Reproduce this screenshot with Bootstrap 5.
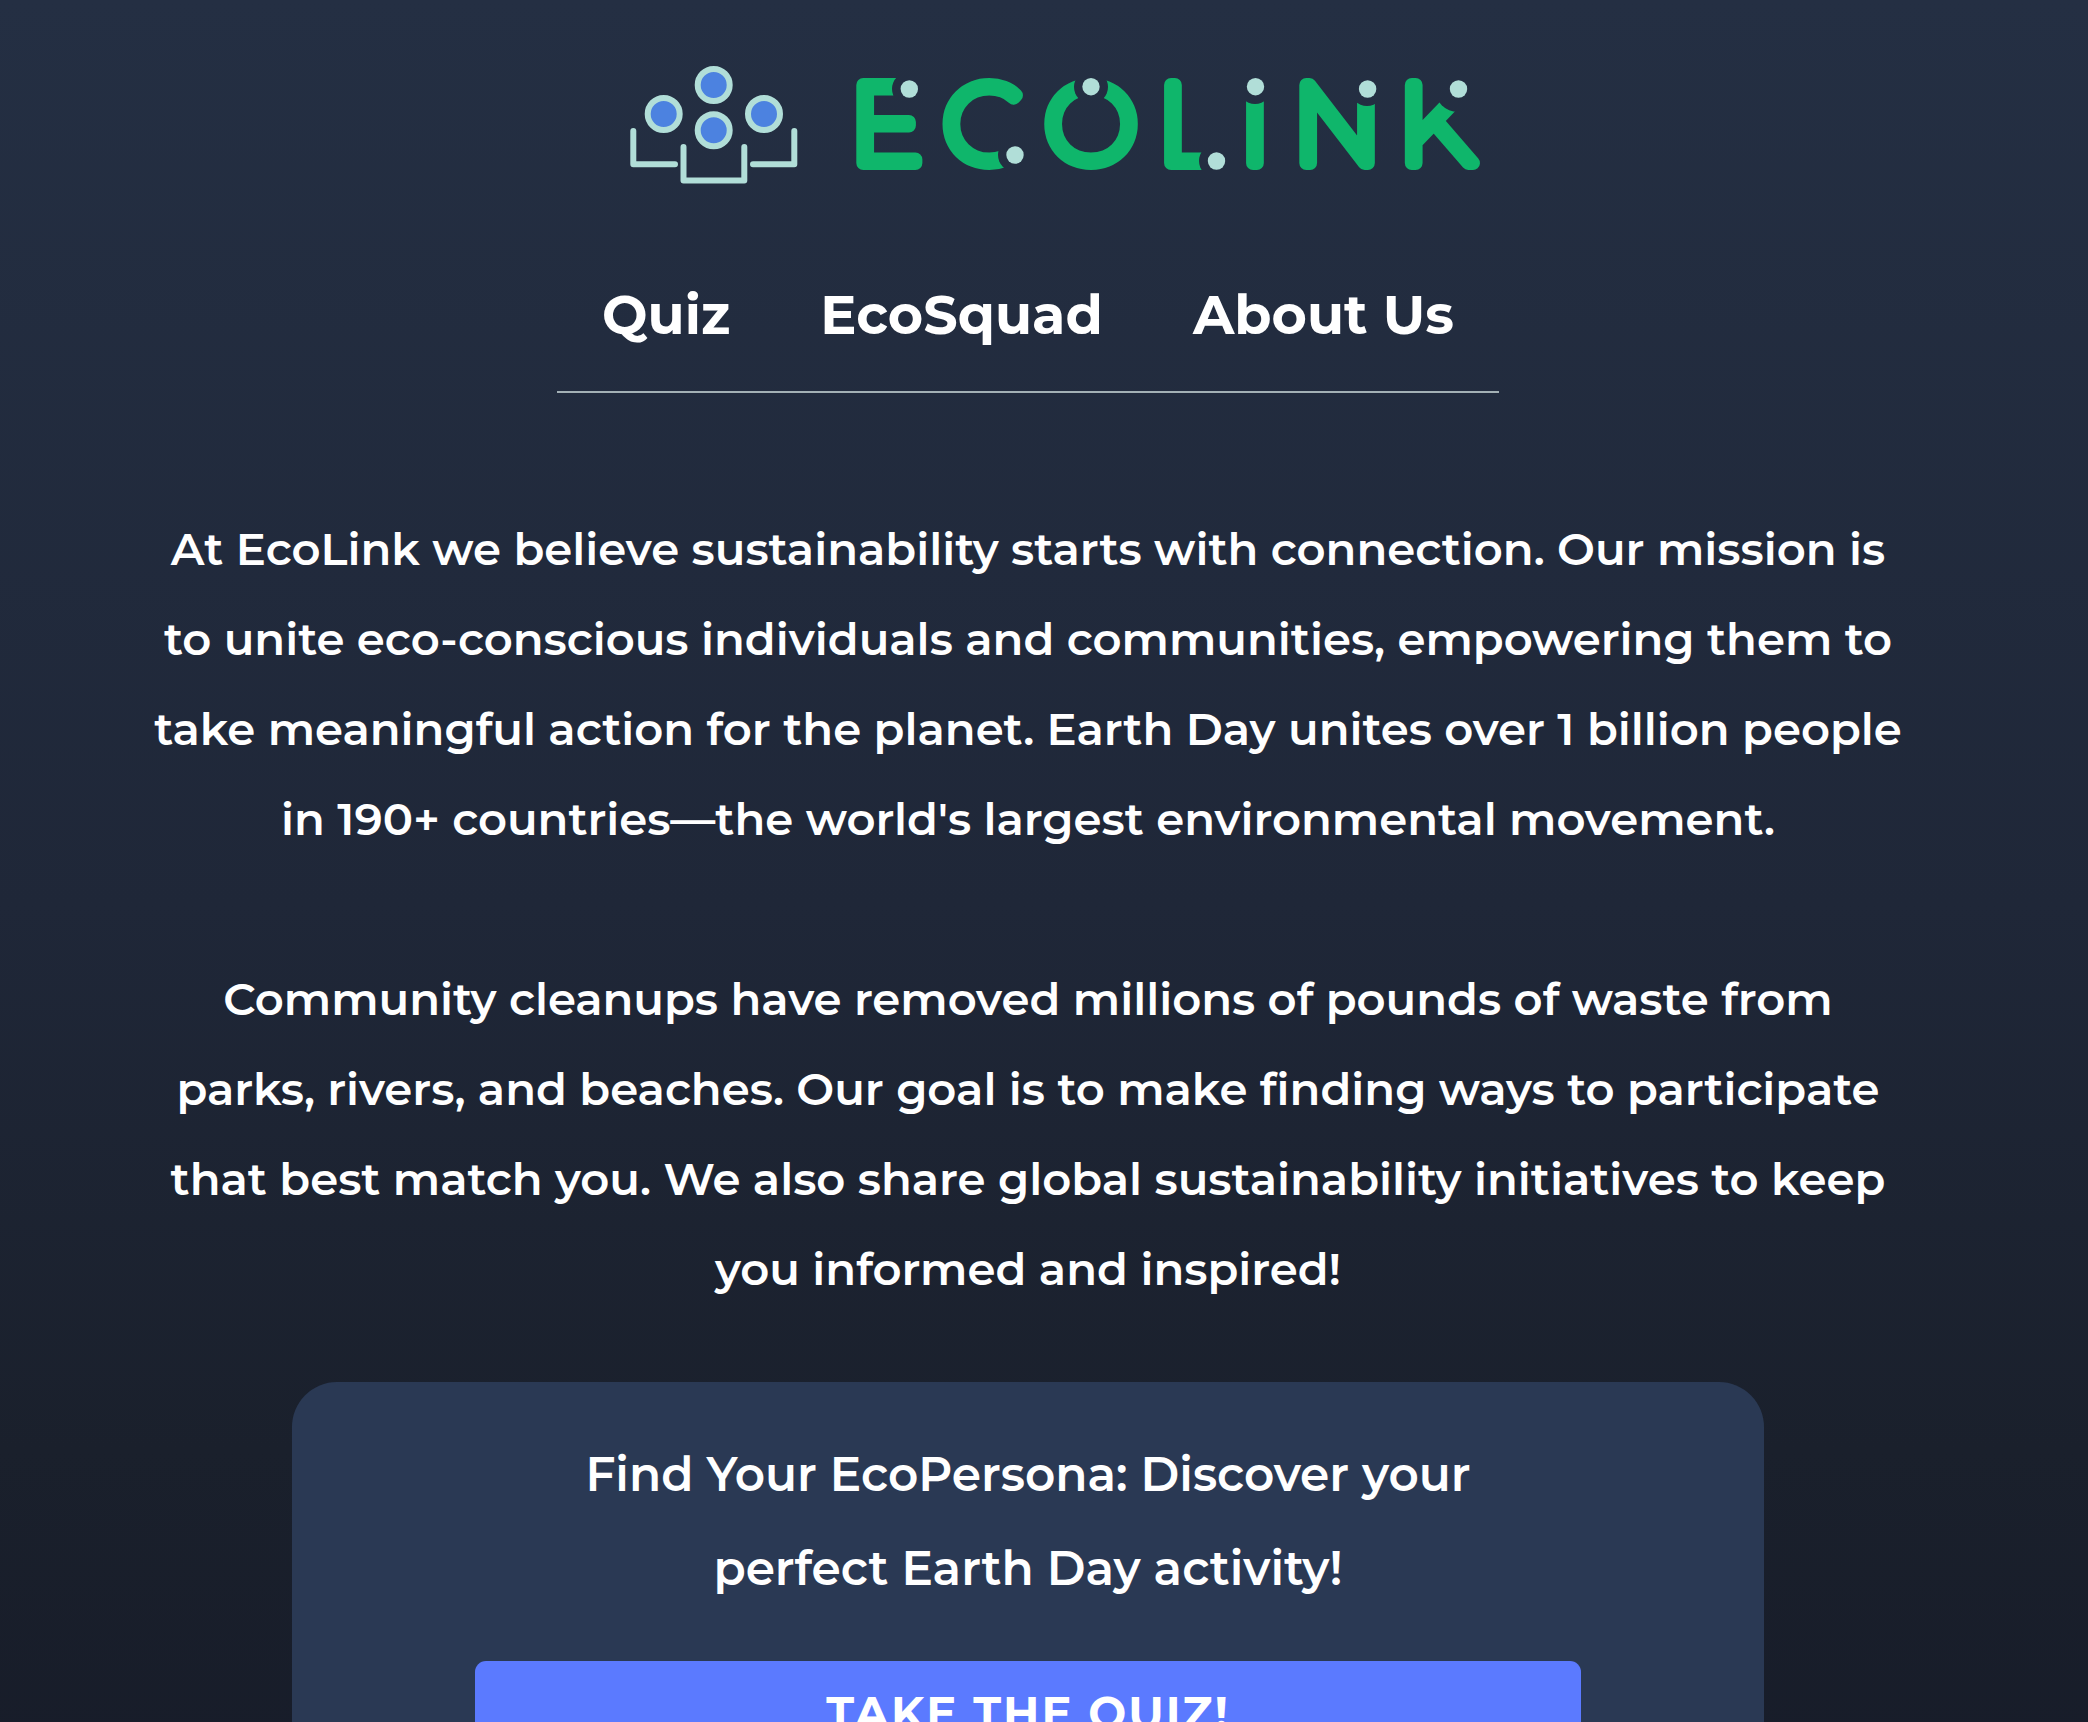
<!DOCTYPE html>
<html lang="en">
<head>
<meta charset="utf-8">
<meta name="viewport" content="width=device-width, initial-scale=1">
<title>EcoLink</title>
<link href="https://cdn.jsdelivr.net/npm/bootstrap@5.3.0/dist/css/bootstrap.min.css" rel="stylesheet">
<style>
body{min-height:100vh;background:linear-gradient(#242f43,#1f2738 50%,#1a202c 80%,#171c29);color:#fff;font-family:Montserrat,Inter,sans-serif;overflow-x:hidden}
.brand-logo{width:880px;max-width:100%;height:auto}
.page-body{padding-right:32px}
.site-nav{gap:90px;margin-top:93px;padding:0 45px 40px;border-bottom:2px solid #a3b0b5}
.site-nav a{color:#fff;font-size:54px;line-height:72px;font-weight:700;text-decoration:none}
.mission{margin-top:111px;font-size:45px;line-height:90px;font-weight:600}
.mission p{margin-bottom:90px}
.mission p:last-child{margin-bottom:68px}
.quiz-card{width:1472px;max-width:92%;padding:46px 24px;border-radius:45px;background:#2a3954}
.quiz-card h2{margin-bottom:45px;font-size:47px;line-height:94px;font-weight:600}
.quiz-btn,.quiz-btn:hover{width:1106px;max-width:100%;padding:18px;border:0;border-radius:11px;background:#5b7aff;color:#fff;font-size:45px;line-height:68px;font-weight:700;letter-spacing:2px}
</style>
</head>
<body>
<header class="d-flex justify-content-center">
<a href="#" class="d-block mt-5 pt-3" aria-label="EcoLink home">
<svg class="brand-logo d-block" viewBox="604 64 880 122" role="img" aria-hidden="true">
<defs>
<mask id="cuts" maskUnits="userSpaceOnUse" x="604" y="64" width="880" height="122">
<rect x="604" y="64" width="880" height="122" fill="#fff"/>
<g fill="#000"><circle cx="909" cy="89" r="17"/><circle cx="1015" cy="155" r="17"/><circle cx="1091" cy="87" r="17"/><circle cx="1216" cy="161" r="17"/><circle cx="1255" cy="87" r="17"/><circle cx="1367" cy="89" r="17"/><circle cx="1458" cy="89" r="23"/></g>
</mask>
</defs>
<g fill="#4c82e0" stroke="#b1ded8" stroke-width="6">
<circle cx="713.7" cy="85" r="16"/><circle cx="663.7" cy="114" r="16"/><circle cx="713.7" cy="130.3" r="16"/><circle cx="764" cy="114" r="16"/>
</g>
<path d="M633.3 131V164.3H675M794.3 131V164.3H753M683.5 147V180.5H744.3V147" fill="none" stroke="#b1ded8" stroke-width="6" stroke-linecap="round" stroke-linejoin="round"/>
<text mask="url(#cuts)" x="886 982 1091 1189 1255 1337 1436" y="163" text-anchor="middle" font-family="Montserrat, Lato, sans-serif" font-weight="200" font-size="110" fill="#0fb66b" stroke="#0fb66b" stroke-width="14" stroke-linejoin="round">ECOLINK</text>
<g fill="#b1ded8"><circle cx="909.3" cy="89" r="8.7"/><circle cx="1015" cy="155" r="8.7"/><circle cx="1091" cy="86.7" r="8.7"/><circle cx="1216.5" cy="161" r="8.7"/><circle cx="1255.5" cy="86.7" r="8.7"/><circle cx="1367.6" cy="89" r="8.7"/><circle cx="1458.5" cy="89" r="8.7"/></g>
</svg>
</a>
</header>
<div class="page-body d-flex flex-column align-items-center text-center">
<nav class="site-nav d-flex flex-wrap justify-content-center" aria-label="Main">
<a href="#quiz">Quiz</a><a href="#squad">EcoSquad</a><a href="#about">About Us</a>
</nav>
<main class="w-100 d-flex flex-column align-items-center">
<section class="mission">
<p>At EcoLink we believe sustainability starts with connection. Our mission is<br>to unite eco-conscious individuals and communities, empowering them to<br>take meaningful action for the planet. Earth Day unites over 1 billion people<br>in 190+ countries—the world's largest environmental movement.</p>
<p>Community cleanups have removed millions of pounds of waste from<br>parks, rivers, and beaches. Our goal is to make finding ways to participate<br>that best match you. We also share global sustainability initiatives to keep<br>you informed and inspired!</p>
</section>
<section class="quiz-card" id="quiz">
<h2>Find Your EcoPersona: Discover your<br>perfect Earth Day activity!</h2>
<button type="button" class="btn quiz-btn">TAKE THE QUIZ!</button>
</section>
</main>
</div>
<script src="https://cdn.jsdelivr.net/npm/bootstrap@5.3.0/dist/js/bootstrap.bundle.min.js"></script>
</body>
</html>
